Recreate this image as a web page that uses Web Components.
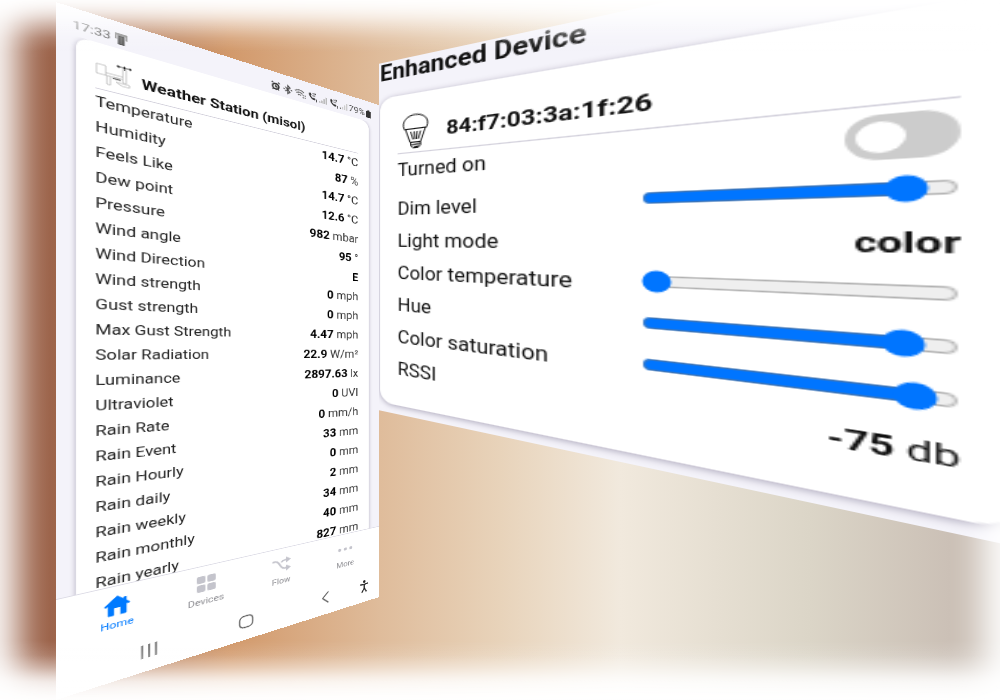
<!DOCTYPE html>
<html lang="en">
<head>
<meta charset="utf-8">
<meta name="viewport" content="width=device-width, initial-scale=1">
<title>Home sensors</title>
<style>
  html, body { margin: 0; height: 100%; overflow: hidden; background: #fff; }
  body { font-family: Roboto, "Noto Sans", sans-serif; font-size: 16px; color: #111; }
</style>
</head>
<body>
<show-room>
  <tilted-wall slot="phone" corners="3 150 853 1000"><weather-screen></weather-screen></tilted-wall>
  <tilted-wall slot="device" corners="91 -100 776 586"><device-screen></device-screen></tilted-wall>
</show-room>

<script>
const define = (name, html, Base = HTMLElement) => {
  const template = document.createElement('template');
  template.innerHTML = html;
  customElements.define(name, class extends Base {
    constructor() {
      super();
      this.attachShadow({ mode: 'open' }).append(template.content.cloneNode(true));
      if (this.setup) this.setup();
    }
  });
};

/* Background room: two walls side by side, edges feathered to white. */
define('show-room', `
  <style>
    :host {
      display: grid; grid-template-columns: 56fr 323fr 621fr; grid-template-rows: minmax(0, 1fr); height: 100vh; position: relative; overflow: hidden;
      background: linear-gradient(90deg, #a4715a 0%, #9c634a 5%, #d2996b 23%, #dfbc9b 38%, #e8d3ba 50%, #f1e9dd 62%, #dbd5c7 81%, #cbc0b6 95%, #cbc0b6 100%);
    }
    :host::after {
      content: ""; position: absolute; inset: 0; pointer-events: none;
      background:
        linear-gradient(rgba(255,255,255,.9), rgba(255,255,255,.6) 12px, rgba(255,255,255,.34) 23px, rgba(255,255,255,.1) 38px, rgba(255,255,255,0) 52px),
        linear-gradient(0deg, rgba(255,255,255,.95), rgba(255,255,255,.75) 18px, rgba(255,255,255,.38) 32px, rgba(255,255,255,.12) 45px, rgba(255,255,255,0) 60px);
      box-shadow: inset 0 0 34px 16px #fff;
    }
    .phone { grid-column: 2; min-width: 0; min-height: 0; }
    .device { grid-column: 3; min-width: 0; min-height: 0; }
    slot { display: block; height: 100%; }
  </style>
  <div class="phone"><slot name="phone"></slot></div>
  <div class="device"><slot name="device"></slot></div>`);

/* Projects its content onto a wall seen in perspective.
   corners: heights of top-left, top-right, bottom-right, bottom-left in thousandths of the wall. */
class Wall extends HTMLElement {
  connectedCallback() {
    this.project();
    this.watch = new ResizeObserver(() => this.project());
    this.watch.observe(this);
  }
  disconnectedCallback() { this.watch.disconnect(); }
  project() {
    const sheet = this.shadowRoot.querySelector('.sheet');
    const W = sheet.offsetWidth, H = sheet.offsetHeight;
    const bw = this.clientWidth, bh = this.clientHeight;
    if (!W || !H || !bw) return;
    const [tl, tr, br, bl] = this.getAttribute('corners').split(' ').map(v => v / 1000 * bh);
    const k = (bl - tl) / (br - tr);
    sheet.style.transform = `matrix3d(${[
      bw * k / W, (tr * k - tl) / W, 0, (k - 1) / W,
      0, (bl - tl) / H, 0, 0,
      0, 0, 1, 0,
      0, tl, 0, 1].join(',')})`;
  }
}
define('tilted-wall', `
  <style>
    :host { display: block; height: 100%; }
    .sheet { width: max-content; transform-origin: 0 0; overflow: hidden; }
  </style>
  <div class="sheet"><slot></slot></div>`, Wall);

/* White card with an icon, a title and a rule below them. */
define('info-card', `
  <style>
    :host { display: block; background: #fff; border-radius: 12px; padding: 16px; box-shadow: 0 1px 5px rgba(40, 30, 70, .35); }
    header { display: flex; align-items: center; height: 36px; border-bottom: 1px solid #d3d1dc; }
    h2 { margin: 0; font-size: 17px; line-height: 20px; font-weight: 700; white-space: nowrap; }
    slot[name=icon] { display: block; width: 32px; margin-right: 9px; }
  </style>
  <header><slot name="icon"></slot><h2><slot name="title"></slot></h2></header>
  <slot></slot>`);

define('tab-item', `
  <style>
    :host { display: block; flex: 1; color: #8e8e93; --ink: #c4c4cc; }
    :host([active]) { color: #007aff; --ink: #007aff; }
    a { display: flex; flex-direction: column; align-items: center; gap: 4px; padding-top: 10px; color: inherit; text-decoration: none; font-size: 11px; line-height: 14px; }
    .icon { height: 24px; color: var(--ink); }
  </style>
  <a href="#"><span class="icon"><slot name="icon"></slot></span><slot></slot></a>`);

class Sensors extends HTMLElement {
  setup() {
    const rows = [
      ['Temperature', '14.7', '°C'], ['Humidity', '87', '%'], ['Feels Like', '14.7', '°C'],
      ['Dew point', '12.6', '°C'], ['Pressure', '982', 'mbar'], ['Wind angle', '95', '°'],
      ['Wind Direction', 'E', ''], ['Wind strength', '0', 'mph'], ['Gust strength', '0', 'mph'],
      ['Max Gust Strength', '4.47', 'mph'], ['Solar Radiation', '22.9', 'W/m²'], ['Luminance', '2897.63', 'lx'],
      ['Ultraviolet', '0', 'UVI'], ['Rain Rate', '0', 'mm/h'], ['Rain Event', '33', 'mm'],
      ['Rain Hourly', '0', 'mm'], ['Rain daily', '2', 'mm'], ['Rain weekly', '34', 'mm'],
      ['Rain monthly', '40', 'mm'], ['Rain yearly', '827', 'mm']];
    this.shadowRoot.querySelector('tbody').innerHTML = rows.map(([label, value, unit]) =>
      `<tr><th scope="row">${label}</th><td><b>${value}</b>${unit ? ' ' + unit : ''}</td></tr>`).join('');
  }
}
define('sensor-table', `
  <style>
    :host { display: block; }
    table { width: 100%; border-collapse: collapse; }
    th, td { height: 29px; padding: 0; line-height: 20px; font-weight: 400; white-space: nowrap; }
    th { text-align: left; color: #222; }
    td { text-align: right; color: #333; }
    b { font-weight: 700; color: #000; }
  </style>
  <table><tbody></tbody></table>`, Sensors);

define('status-bar', `
  <style>
    :host { display: flex; align-items: center; justify-content: space-between; box-sizing: border-box; height: 31px; padding: 6px 12px 0 13px; font-size: 13px; line-height: 16px; color: #555; }
    div { display: flex; align-items: center; gap: 1px; }
    .clock { gap: 3px; }
    svg { display: block; }
  </style>
  <div class="clock"><span>17:33</span>
    <svg width="13" height="14" viewBox="0 0 13 14"><path d="M1 1h11v7h-1.500V3.500h-8V8H1z" fill="#888"/><path d="M3.500 3.500h6V14h-6z" fill="#444"/><path d="M5 5v8M6.500 5v8M8 5v8" stroke="#888" stroke-width=".6"/></svg>
  </div>
  <div>
    <svg width="14" height="14" viewBox="0 0 14 14"><circle cx="7" cy="7.500" r="3.800" fill="#ddd" stroke="#333" stroke-width="2"/><path d="M7 5.500v2.500h2M2 3l2-1.500M12 3l-2-1.500M3 12l1-1M11 12l-1-1" stroke="#333" stroke-width="1.500" fill="none"/></svg>
    <svg width="14" height="14" viewBox="0 0 14 14"><path d="M4 4l6 6-3 2.500v-11L10 4l-6 6" fill="none" stroke="#444" stroke-width="1.300"/><circle cx="2.500" cy="7" r="1" fill="#444"/><circle cx="11.500" cy="7" r="1" fill="#444"/></svg>
    <svg width="16" height="14" viewBox="0 0 16 14" fill="none" stroke="#666" stroke-width="1.300"><path d="M1 5q6-5 12 0M3 7.500q4-3.500 8 0M5 10q2-2 4 0"/><path d="M12 8v5M14.500 8v5" stroke-dasharray="2 1"/></svg>
    <svg width="14" height="14" viewBox="0 0 14 14"><path d="M3 2c-2 2 2 9 7 9l1.500-2-2.500-1.500-1 1C6.500 8 5 6 4.700 5.300L6 4 4.500 1.500z" fill="#333"/><path d="M7 2h5M10.500.5L12 2l-1.500 1.500M7 5h4" fill="none" stroke="#444"/><path d="M12.500 9v4" stroke="#444"/></svg>
    <svg width="13" height="14" viewBox="0 0 13 14"><path d="M1 10h2v2H1zM4 8h2v4H4zM7 5h2v7H7zM10 2h2v10h-2z" fill="#bbb"/></svg>
    <svg width="14" height="14" viewBox="0 0 14 14"><path d="M3 2c-2 2 2 9 7 9l1.500-2-2.500-1.500-1 1C6.500 8 5 6 4.700 5.300L6 4 4.500 1.500z" fill="#333"/><path d="M7 2h5M10.500.5L12 2l-1.500 1.500M7 5h4" fill="none" stroke="#444"/><path d="M12.500 9v4" stroke="#444"/></svg>
    <svg width="13" height="14" viewBox="0 0 13 14"><path d="M1 10h2v2H1z" fill="#777"/><path d="M4 8h2v4H4zM7 5h2v7H7zM10 2h2v10h-2z" fill="#ccc"/></svg>
    <span>79%</span>
    <svg width="9" height="14" viewBox="0 0 9 14"><path d="M1 3h2V1.500h3V3h2v10H1z" fill="#333"/></svg>
  </div>`);

define('weather-screen', `
  <style>
    :host { display: flex; flex-direction: column; width: 360px; height: 768px; background: #f4f3fa; }
    main { flex: 1; min-height: 0; overflow: hidden; padding: 0 16px; }
    .tabs { display: flex; height: 62px; padding: 0 8px; background: #fff; border-top: 1px solid #dddce6; }
    svg { display: block; }
    .system { display: grid; grid-template-columns: 93px 101px 100px 55px; align-items: center; justify-items: end; height: 48px; background: #fff; }
    button { border: 0; padding: 0; background: none; color: #555; }
  </style>
  <status-bar></status-bar>
  <main>
    <info-card>
      <svg slot="icon" width="32" height="32" viewBox="0 0 32 32" fill="none" stroke="#aaa" stroke-width=".7">
        <path d="M1 6h8v11H1zM9 14h15M9 17h15M10 17v10h3V17M24 5h3v16h-3zM16 17h6M17 19h5M18 22h12v3h-7z"/>
        <path d="M15 18.500h7" stroke="#666" stroke-width="1.200"/>
        <path d="M19 3h12M25.500 1v5" stroke="#111"/><circle cx="20" cy="3" r="1.300" fill="#000"/><circle cx="25.500" cy="3" r="1.300" fill="#000"/><circle cx="30.500" cy="3" r="1.200" fill="#000"/>
      </svg>
      <span slot="title">Weather Station (misol)</span>
      <sensor-table></sensor-table>
    </info-card>
  </main>
  <nav class="tabs">
    <tab-item active><svg slot="icon" width="24" height="24" viewBox="0 0 26 24" preserveAspectRatio="none"><path d="M13 1 0.500 11.500 2 13l2-1v10.500q0 1 1 1h5V15h6v8.500h5q1 0 1-1V12l2 1 1.500-1.500L22 8.200V4h-3v1.800z" fill="currentColor"/></svg>Home</tab-item>
    <tab-item><svg slot="icon" width="24" height="24" viewBox="0 0 24 24" fill="currentColor"><rect x="2" y="2" width="9" height="9" rx="2"/><rect x="13" y="2" width="9" height="9" rx="2"/><rect x="2" y="13" width="9" height="9" rx="2"/><rect x="13" y="13" width="9" height="9" rx="2"/></svg>Devices</tab-item>
    <tab-item><svg slot="icon" width="24" height="24" viewBox="0 0 26 24"><path d="M1 6h4c6 0 6 12 12 12h4M13 8.500c1.500-2 3-2.500 5-2.500h3" fill="none" stroke="currentColor" stroke-width="2.400"/><path d="M19.500 1.500 26 6l-6.500 4.500zM19.500 13.500 26 18l-6.500 4.500z" fill="currentColor"/></svg>Flow</tab-item>
    <tab-item><svg slot="icon" width="24" height="24" viewBox="0 0 24 24" fill="currentColor"><circle cx="4" cy="12" r="2.300"/><circle cx="12" cy="12" r="2.300"/><circle cx="20" cy="12" r="2.300"/></svg>More</tab-item>
  </nav>
  <div class="system">
    <button aria-label="Recent apps"><svg width="26" height="20" viewBox="0 0 26 20"><path d="M6.500 2v16M13 2v16M19.500 2v16" stroke="currentColor" stroke-width="1.600"/></svg></button>
    <button aria-label="Home screen"><svg width="26" height="20" viewBox="0 0 26 20"><rect x="5.500" y="2.500" width="15" height="15" rx="5" fill="none" stroke="currentColor" stroke-width="1.400"/></svg></button>
    <button aria-label="Back"><svg width="26" height="20" viewBox="0 0 26 20"><path d="M17 2 9 10l8 8" fill="none" stroke="currentColor" stroke-width="1.600"/></svg></button>
    <button aria-label="Accessibility"><svg width="24" height="20" viewBox="0 0 24 20"><circle cx="12" cy="3" r="2" fill="#222"/><path d="M6 6.500l6 1 6-1M12 7v6l-3.500 6M12 13l3.500 6" fill="none" stroke="#222" stroke-width="1.800"/></svg></button>
  </div>`);

define('device-screen', `
  <style>
    :host { display: block; width: 328px; background: #f4f3fa; padding: 0 0 8px 1px; box-sizing: border-box; }
    h1 { margin: 0; height: 33px; font-size: 20px; line-height: 21px; font-weight: 700; }
    info-card { padding: 16px 16px 19px 16px; margin-right: -4px; }
    .row { display: flex; align-items: center; justify-content: space-between; height: 29px; line-height: 20px; }
    .tall { height: 35px; }
    .tall label { align-self: flex-start; line-height: 29px; }
    input[type=range] { width: 131px; margin: 0 0 4px; accent-color: #0075ff; }
    .switch { appearance: none; margin: 0; width: 40px; height: 26px; border-radius: 13px; background: #ccc; display: flex; align-items: center; padding: 4px; box-sizing: border-box; }
    .switch::before { content: ""; width: 18px; height: 18px; border-radius: 9px; background: #fff; }
    .switch:checked { background: #0075ff; justify-content: flex-end; }
    output b { font-weight: 700; }
    svg { display: block; }
  </style>
  <h1>Enhanced Device</h1>
  <info-card>
    <svg slot="icon" width="32" height="32" viewBox="0 0 32 32" fill="none" stroke="#111">
      <path d="M6 13.500C2.500 5.500 9.500 1 15.500 1s13 4.500 9.500 12.500z"/>
      <path d="M7 13.500 11 25.500h9l4-12M11.500 16l2 7M14.500 16l.5 7M17 16l-.5 7M20 16l-2 7M11.500 25.500v3l2 2h4.500l2-2v-3M12 28l8-1M14 30l5-1"/>
    </svg>
    <span slot="title">84:f7:03:3a:1f:26</span>
    <div class="row tall"><label for="on">Turned on</label><input class="switch" id="on" type="checkbox"></div>
    <div class="row"><label for="dim">Dim level</label><input id="dim" type="range" value="91"></div>
    <div class="row"><span>Light mode</span><output><b>color</b></output></div>
    <div class="row"><label for="ct">Color temperature</label><input id="ct" type="range" value="0"></div>
    <div class="row"><label for="hue">Hue</label><input id="hue" type="range" value="90"></div>
    <div class="row"><label for="sat">Color saturation</label><input id="sat" type="range" value="94"></div>
    <div class="row"><span>RSSI</span><output><b>-75</b> db</output></div>
  </info-card>`);
</script>
</body>
</html>
